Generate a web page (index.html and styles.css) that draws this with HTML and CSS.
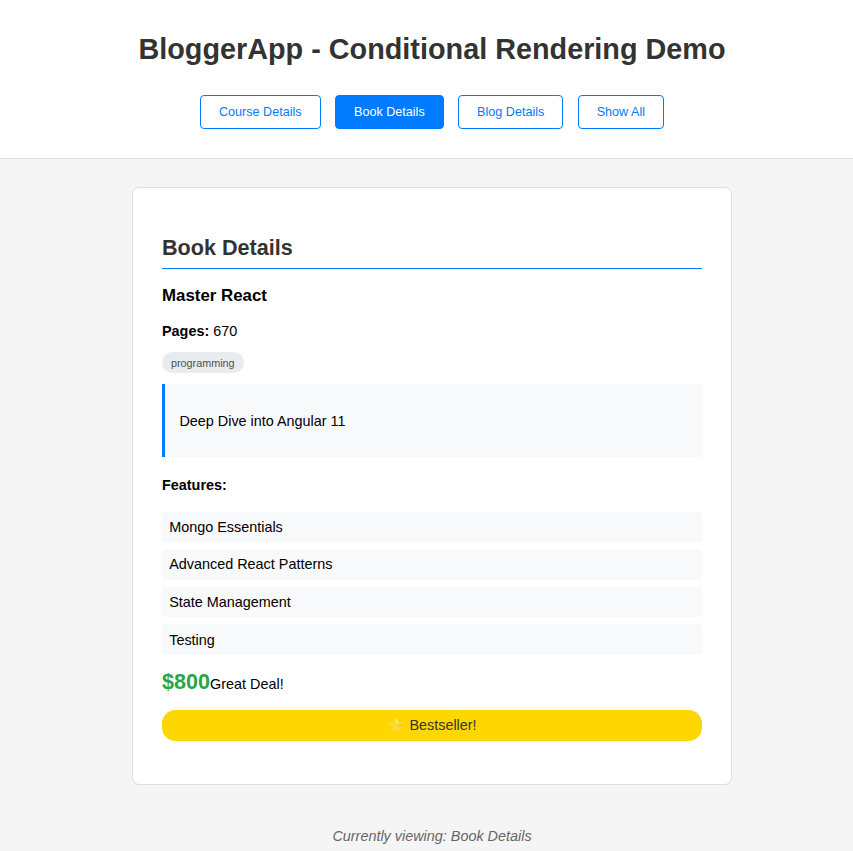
FILE: index.html
```html
<!DOCTYPE html>
<html lang="en">
<head>
<meta charset="utf-8">
<title>BloggerApp</title>
<link rel="stylesheet" href="styles.css">
</head>
<body>
<header class="header">
  <h1>BloggerApp - Conditional Rendering Demo</h1>
  <nav class="nav">
    <button class="btn">Course Details</button>
    <button class="btn active">Book Details</button>
    <button class="btn">Blog Details</button>
    <button class="btn">Show All</button>
  </nav>
</header>
<main class="card">
  <h2>Book Details</h2>
  <h3>Master React</h3>
  <p class="pages"><strong>Pages:</strong> 670</p>
  <span class="tag">programming</span>
  <div class="description"><p>Deep Dive into Angular 11</p></div>
  <h4>Features:</h4>
  <ul class="features">
    <li>Mongo Essentials</li>
    <li>Advanced React Patterns</li>
    <li>State Management</li>
    <li>Testing</li>
  </ul>
  <div class="deal"><span class="price">$800</span><span>Great Deal!</span></div>
  <div class="bestseller">⭐ Bestseller!</div>
</main>
<footer class="status">Currently viewing: Book Details</footer>
</body>
</html>
```

FILE: styles.css
```css
* { box-sizing: border-box; }
html { overflow: hidden; background: #f5f5f5; }
body {
  margin: 0;
  width: 864px;
  font-family: "Liberation Sans", Arial, sans-serif;
  font-size: 14.4px;
  line-height: 16px;
  color: #000;
}
.header {
  height: 159px;
  padding-top: 33px;
  background: #fff;
  border-bottom: 1px solid #ddd;
  text-align: center;
}
h1 { margin: 0; font-size: 28.8px; line-height: 33px; color: #333; }
.nav { display: flex; justify-content: center; gap: 14.4px; margin-top: 29px; }
.btn {
  height: 34px;
  padding: 0 18px;
  font: 12.6px "Liberation Sans", Arial, sans-serif;
  color: #007bff;
  background: #fff;
  border: 1px solid #007bff;
  border-radius: 4px;
}
.btn.active { background: #007bff; color: #fff; }
.card {
  width: 600px;
  height: 598px;
  margin: 28px auto 0;
  padding: 47px 29px 0;
  background: #fff;
  border: 1px solid #ddd;
  border-radius: 7.2px;
}
h2 {
  margin: 0;
  padding-bottom: 8px;
  font-size: 21.6px;
  line-height: 25px;
  color: #333;
  border-bottom: 1px solid #007bff;
}
h3 { margin: 17px 0 0; font-size: 16.85px; line-height: 19px; }
.pages { margin: 18px 0 0; line-height: 16px; }
.tag {
  display: block;
  width: fit-content;
  height: 21px;
  margin-top: 13px;
  padding: 0 9px;
  font-size: 10.8px;
  line-height: 22px;
  color: #495057;
  background: #e9ecef;
  border-radius: 10.8px;
}
.description {
  height: 73px;
  margin-top: 11px;
  padding: 29px 14.4px;
  background: #f8f9fa;
  border-left: 3px solid #007bff;
}
.description p { margin: 0; }
h4 { margin: 20px 0 0; font-size: 14.4px; line-height: 16px; }
.features { margin: 18.75px 0 0; padding: 0; list-style: none; }
.features li {
  margin-bottom: 7.17px;
  padding: 7.1px 7.2px 7.3px;
  background: #f8f9fa;
  border-radius: 3.6px;
}
.features li:last-child { padding-top: 7.7px; padding-bottom: 6.7px; }
.deal { margin-top: 14.2px; line-height: 25px; }
.price { font-size: 21.6px; font-weight: bold; color: #28a745; }
.bestseller {
  height: 31px;
  margin-top: 13px;
  line-height: 31px;
  text-align: center;
  color: #333;
  background: #ffd700;
  border-radius: 13.5px;
}
.status { margin-top: 43px; text-align: center; font-style: italic; color: #666; }
```
